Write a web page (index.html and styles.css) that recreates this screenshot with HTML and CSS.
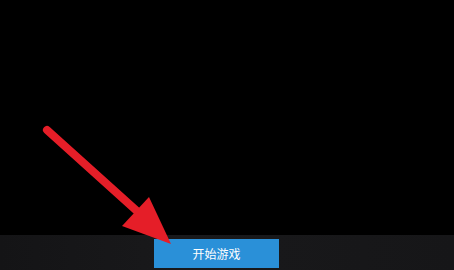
FILE: index.html
```html
<!DOCTYPE html>
<html>
<head>
<meta charset="utf-8">
<link rel="stylesheet" href="styles.css">
</head>
<body>
<div class="page">
  <div class="stage"></div>
  <div class="bar">
    <button class="start">开始游戏</button>
  </div>
  <svg class="arrow" width="454" height="270" viewBox="0 0 454 270">
    <line x1="47" y1="130" x2="138" y2="212" stroke="#e51e28" stroke-width="8" stroke-linecap="round"/>
    <polygon points="149,197 171,244 122,226" fill="#e51e28"/>
  </svg>
</div>
</body>
</html>
```
FILE: styles.css
```css
html, body {
  margin: 0;
  padding: 0;
  background: #000;
}
.page {
  position: relative;
  width: 454px;
  height: 270px;
  display: flex;
  flex-direction: column;
  overflow: hidden;
}
.stage {
  flex: 1;
  background: #000;
}
.bar {
  height: 35px;
  box-sizing: border-box;
  padding: 4px 0 2px 154px;
  background: linear-gradient(90deg, #141416 0%, #19191b 40%, #161618 100%);
  display: flex;
}
.start {
  width: 125px;
  height: 29px;
  border: 0;
  margin: 0;
  padding: 0;
  background: #2a90d8;
  color: #fff;
  font-family: "Noto Sans CJK SC", "Noto Sans", sans-serif;
  font-size: 12px;
  line-height: 29px;
  text-align: center;
}
.arrow {
  position: absolute;
  left: 0;
  top: 0;
  pointer-events: none;
}
```
